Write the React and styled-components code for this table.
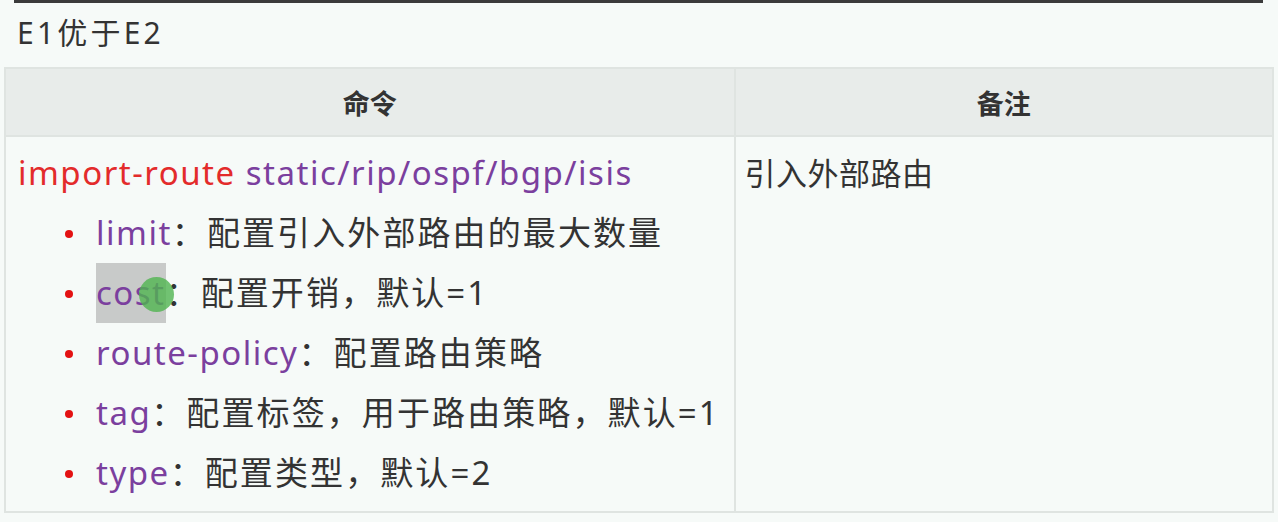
import React from "react";
import styled, { createGlobalStyle } from "styled-components";

const GlobalStyle = createGlobalStyle`
    body {
        margin: 0;
        background: #f6faf8;
        font-family: "Noto Sans", "Noto Sans CJK SC", sans-serif;
        color: #333;
    }
`;

const Page = styled.div`
    width: 1278px;
    height: 522px;
    overflow: hidden;
`;

const TopRule = styled.div`
    margin: 0 15px 0 14px;
    height: 3px;
    background-color: #3b3b3b;
`;

const Title = styled.div`
    padding: 10px 0 0 17px;
    height: 54px;
    font-size: 30px;
    line-height: 40px;
    letter-spacing: 3.2px;
    color: #333;
`;

const Table = styled.table`
    margin-left: 4px;
    width: 1270px;
    border-collapse: collapse;
    border: 2px solid #dfe4e1;
`;

const HeadCell = styled.th`
    height: 66px;
    padding: 0;
    background-color: #e8ecea;
    border: 2px solid #dfe4e1;
    font-size: 27px;
    font-weight: 700;
    color: #333;
    width: ${props => props.width}px;
`;

const Cell = styled.td`
    vertical-align: top;
    padding: 6px 10px 0 ${props => props.indent}px;
    height: 368px;
    border: 2px solid #dfe4e1;
    background-color: #f6faf8;
    font-size: ${props => props.size}px;
    line-height: 60px;
    letter-spacing: ${props => props.spread}px;
`;

const Red = styled.span`
    color: #e32b2b;
`;

const Purple = styled.span`
    color: #7b3f9e;
`;

const Options = styled.ul`
    margin: 0;
    padding: 0 0 0 78px;
    list-style: none;
`;

const Option = styled.li`
    position: relative;
    line-height: 60px;
    letter-spacing: ${props => props.spread}px;
    &::before {
        content: "";
        position: absolute;
        left: -31px;
        top: 27px;
        width: 8px;
        height: 8px;
        border-radius: 50%;
        background: #e31212;
    }
`;

const Key = styled.span`
    position: relative;
    letter-spacing: 1.5px;
    color: #7b3f9e;
    background: ${props => props.marked ? "#c8cac9" : "transparent"};
    padding: ${props => props.marked ? "7px 0 8px" : "0"};
`;

const Cursor = styled.span`
    position: absolute;
    right: -8px;
    top: 14px;
    width: 35px;
    height: 35px;
    border-radius: 50%;
    background: rgba(80, 180, 80, 0.8);
`;

const options = [
    { key: "limit", text: "配置引入外部路由的最大数量" },
    { key: "cost", text: "配置开销，默认=1", marked: true },
    { key: "route-policy", text: "配置路由策略" },
    { key: "tag", text: "配置标签，用于路由策略，默认=1" },
    { key: "type", text: "配置类型，默认=2" },
];

export default function App() {
    return (
        <Page>
            <GlobalStyle />
            <TopRule />
            <Title>E1优于E2</Title>
            <Table>
                <thead>
                    <tr>
                        <HeadCell width={730}>命令</HeadCell>
                        <HeadCell width={540}>备注</HeadCell>
                    </tr>
                </thead>
                <tbody>
                    <tr>
                        <Cell indent={12} size={33} spread={1.5}>
                            <div>
                                <Red>import-route</Red> <Purple>static/rip/ospf/bgp/isis</Purple>
                            </div>
                            <Options>
                                {options.map(o => (
                                    <Option key={o.key} spread={2.1}>
                                        <Key marked={o.marked}>
                                            {o.key}
                                            {o.marked && <Cursor />}
                                        </Key>：{o.text}
                                    </Option>
                                ))}
                            </Options>
                        </Cell>
                        <Cell indent={9} size={31} spread={0.5}>引入外部路由</Cell>
                    </tr>
                </tbody>
            </Table>
        </Page>
    );
}
